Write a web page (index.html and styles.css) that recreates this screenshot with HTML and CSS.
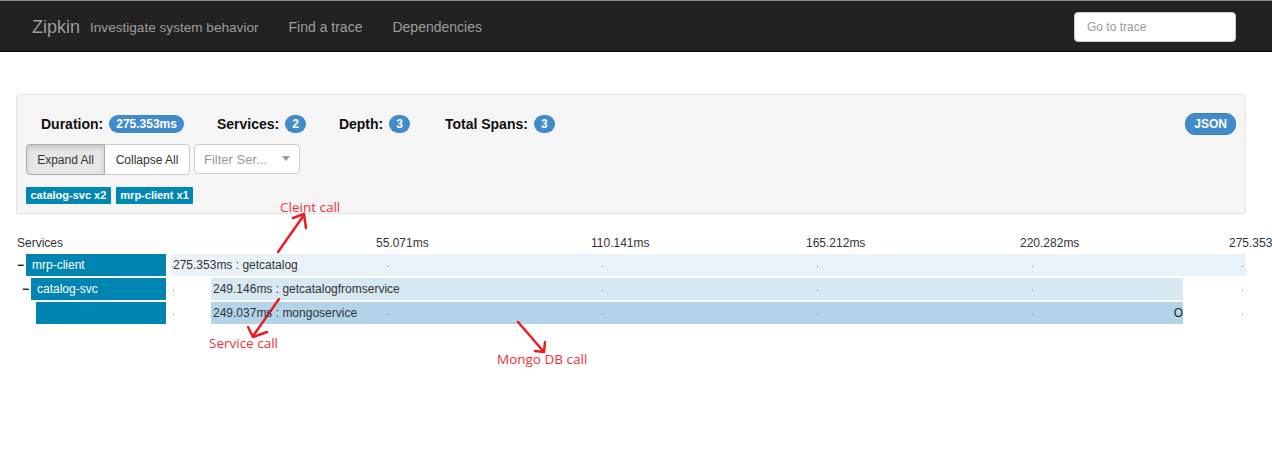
FILE: index.html
```html
<!DOCTYPE html>
<html>
<head>
<meta charset="utf-8">
<title>Zipkin</title>
<link rel="stylesheet" href="styles.css">
</head>
<body>
<header class="navbar">
  <div class="brand">Zipkin</div>
  <div class="tagline">Investigate system behavior</div>
  <nav class="nav">
    <a class="nav-link">Find a trace</a>
    <a class="nav-link">Dependencies</a>
  </nav>
  <input class="goto" type="text" placeholder="Go to trace">
</header>

<main class="page">
  <section class="summary">
    <div class="summary-head">
      <div class="stats">
        <span class="stat"><b>Duration:</b> <span class="badge">275.353ms</span></span>
        <span class="stat"><b>Services:</b> <span class="badge">2</span></span>
        <span class="stat"><b>Depth:</b> <span class="badge">3</span></span>
        <span class="stat"><b>Total Spans:</b> <span class="badge">3</span></span>
      </div>
      <span class="json-btn">JSON</span>
    </div>
    <div class="controls">
      <div class="btn-group">
        <button class="btn active">Expand All</button>
        <button class="btn">Collapse All</button>
      </div>
      <div class="select">
        <span class="select-text">Filter Ser...</span>
        <span class="caret"></span>
      </div>
    </div>
    <div class="tags">
      <span class="tag">catalog-svc x2</span>
      <span class="tag">mrp-client x1</span>
    </div>
  </section>

  <section class="trace">
    <div class="trace-row trace-header">
      <div class="svc-col svc-label">Services</div>
      <div class="timeline">
        <span class="tick-label" style="left:205px">55.071ms</span>
        <span class="tick-label" style="left:420px">110.141ms</span>
        <span class="tick-label" style="left:635px">165.212ms</span>
        <span class="tick-label" style="left:849px">220.282ms</span>
        <span class="tick-label" style="left:1058px">275.353</span>
      </div>
    </div>

    <div class="trace-row">
      <div class="svc-col depth-0">
        <span class="toggle">&minus;</span>
        <span class="svc-name">mrp-client</span>
      </div>
      <div class="timeline">
        <div class="bar bar-1" style="left:0px;width:1075px">
          <span class="bar-text">275.353ms : getcatalog</span>
        </div>
        <span class="dot" style="left:1px"></span>
        <span class="dot" style="left:216px"></span>
        <span class="dot" style="left:431px"></span>
        <span class="dot" style="left:646px"></span>
        <span class="dot" style="left:861px"></span>
        <span class="dot" style="left:1071px"></span>
      </div>
    </div>

    <div class="trace-row">
      <div class="svc-col depth-1">
        <span class="toggle">&minus;</span>
        <span class="svc-name">catalog-svc</span>
      </div>
      <div class="timeline">
        <div class="bar bar-2" style="left:40px;width:972px">
          <span class="bar-text">249.146ms : getcatalogfromservice</span>
        </div>
        <span class="dot" style="left:2px"></span>
        <span class="dot" style="left:216px"></span>
        <span class="dot" style="left:431px"></span>
        <span class="dot" style="left:646px"></span>
        <span class="dot" style="left:861px"></span>
        <span class="dot" style="left:1071px"></span>
      </div>
    </div>

    <div class="trace-row">
      <div class="svc-col depth-2">
        <span class="toggle"></span>
        <span class="svc-name"></span>
      </div>
      <div class="timeline">
        <div class="bar bar-3" style="left:40px;width:972px">
          <span class="bar-text">249.037ms : mongoservice</span>
          <span class="bar-end">O</span>
        </div>
        <span class="dot" style="left:2px"></span>
        <span class="dot" style="left:216px"></span>
        <span class="dot" style="left:431px"></span>
        <span class="dot" style="left:646px"></span>
        <span class="dot" style="left:861px"></span>
        <span class="dot" style="left:1071px"></span>
      </div>
    </div>
  </section>
</main>

<div class="annotations">
  <svg class="arrows" width="1272" height="466" viewBox="0 0 1272 466">
    <g stroke="#ec1c24" stroke-width="2.5" fill="none" stroke-linecap="round" stroke-linejoin="round">
      <path d="M278 252 L304 215"/>
      <path d="M293 218 L304 214 L306 228"/>
      <path d="M279 299 L253 336"/>
      <path d="M248 327 L253 337 L267 332"/>
      <path d="M518 322 L544 352"/>
      <path d="M545 342 L544 352 L535 351"/>
    </g>
  </svg>
  <span class="note note-client">Cleint call</span>
  <span class="note note-service">Service call</span>
  <span class="note note-mongo">Mongo DB call</span>
</div>
</body>
</html>
```

FILE: styles.css
```css
* { box-sizing: border-box; }

html, body {
  margin: 0;
  padding: 0;
  overflow: hidden;
}

body {
  font-family: "Liberation Sans", Arial, sans-serif;
  font-size: 14px;
  color: #333;
  background: #fff;
  width: 1272px;
  height: 466px;
  position: relative;
}

/* Navbar */
.navbar {
  height: 52px;
  background: #222;
  border-top: 1px solid #8a8a8a;
  border-bottom: 1px solid #080808;
  display: flex;
  align-items: center;
  padding-left: 32px;
  padding-right: 36px;
}

.brand {
  font-size: 18px;
  color: #9d9d9d;
  margin-right: 10px;
  margin-top: 2px;
}

.tagline {
  font-size: 13.6px;
  color: #9d9d9d;
  margin-top: 3px;
}

.nav {
  display: flex;
  gap: 30px;
  margin-left: 30px;
  flex: 1;
  margin-top: 2px;
}

.nav-link {
  font-size: 14px;
  color: #9d9d9d;
}

.goto {
  width: 162px;
  height: 30px;
  border: 1px solid #ccc;
  border-radius: 4px;
  padding: 0 12px;
  font-family: "Liberation Sans", Arial, sans-serif;
  font-size: 12px;
  color: #555;
  background: #fff;
  margin-top: 1px;
}

.goto::placeholder { color: #999; }

/* Page */
.page {
  padding: 42px 26px 0 16px;
}

.summary {
  background: #f5f5f5;
  border: 1px solid #e3e3e3;
  border-radius: 3px;
  padding: 19px 9px 9px 9px;
  height: 120px;
}

.summary-head {
  display: flex;
  justify-content: space-between;
  align-items: center;
  height: 20px;
  padding-left: 15px;
}

.stats {
  display: flex;
  align-items: center;
}

.stat {
  margin-right: 33px;
  display: flex;
  align-items: center;
  gap: 6px;
}

.stat:nth-child(3) {
  margin-right: 35px;
}

.stat b {
  font-weight: bold;
  font-size: 14px;
  color: #111;
}

.badge {
  display: inline-block;
  background: #428bca;
  color: #fff;
  font-weight: bold;
  font-size: 12px;
  line-height: 12px;
  padding: 3px 7px;
  border-radius: 10px;
  min-width: 10px;
  text-align: center;
}

.json-btn {
  display: inline-block;
  background: #428bca;
  color: #fff;
  font-weight: bold;
  font-size: 12px;
  line-height: 14px;
  padding: 3px 8px;
  border-radius: 10px;
  border: 1px solid #357ebd;
}

.controls {
  display: flex;
  align-items: flex-start;
  margin-top: 10px;
  gap: 4px;
}

.btn-group {
  display: flex;
}

.btn {
  font-family: "Liberation Sans", Arial, sans-serif;
  font-size: 12px;
  color: #333;
  background: #fff;
  border: 1px solid #ccc;
  height: 31px;
  padding: 0 10px;
  margin: 0;
  cursor: pointer;
}

.btn:first-child {
  border-radius: 4px 0 0 4px;
  width: 79px;
}

.btn:last-child {
  border-radius: 0 4px 4px 0;
  border-left: none;
  width: 85px;
}

.btn.active {
  background: #e6e6e6;
  border-color: #adadad;
  box-shadow: inset 0 3px 5px rgba(0, 0, 0, 0.125);
}

.select {
  width: 106px;
  height: 30px;
  border: 1px solid #ccc;
  border-radius: 4px;
  background: #fff;
  display: flex;
  align-items: center;
  justify-content: space-between;
  padding: 0 9px 0 9px;
}

.select-text {
  font-size: 13px;
  color: #999;
}

.caret {
  width: 0;
  height: 0;
  border-left: 4px solid transparent;
  border-right: 4px solid transparent;
  border-top: 5px solid #999;
  margin-bottom: 2px;
}

.tags {
  display: flex;
  gap: 5px;
  margin-top: 12px;
}

.tag {
  display: inline-block;
  background: #0087b4;
  color: #fff;
  font-weight: bold;
  font-size: 11px;
  line-height: 17px;
  height: 17px;
  padding: 0 4.5px;
  border-radius: 1px;
}

/* Trace */
.trace {
  margin-top: 20px;
}

.trace-row {
  display: flex;
  height: 22px;
  margin-bottom: 2px;
}

.trace-header {
  height: 18px;
  margin-bottom: 2px;
  font-size: 12px;
  line-height: 18px;
}

.svc-col {
  width: 150px;
  display: flex;
  align-items: stretch;
  font-size: 12px;
}

.svc-label {
  padding-left: 1px;
  color: #333;
}

.depth-0 { padding-left: 1px; }
.depth-1 { padding-left: 6px; }
.depth-2 { padding-left: 11px; }

.toggle {
  width: 9px;
  font-size: 12px;
  font-weight: bold;
  line-height: 22px;
  color: #111;
}

.svc-name {
  flex: 1;
  background: #0085b2;
  color: #fff;
  font-size: 12px;
  line-height: 22px;
  padding-left: 6px;
}

.timeline {
  position: relative;
  width: 1075px;
  margin-left: 5px;
  font-size: 12px;
}

.tick-label {
  position: absolute;
  top: 0;
  white-space: nowrap;
  color: #333;
}

.bar {
  position: absolute;
  top: 0;
  height: 22px;
  line-height: 22px;
  overflow: hidden;
}

.bar-1 { background: #eaf2f9; }
.bar-2 { background: #d7e8f3; }
.bar-3 { background: #b3d4e8; }

.bar-text {
  padding-left: 2px;
  color: #333;
  white-space: nowrap;
  position: relative;
  z-index: 1;
}

.bar-end {
  position: absolute;
  right: 0;
  top: 0;
  color: #222;
  font-size: 12px;
}

.dot {
  position: absolute;
  top: 12px;
  width: 1px;
  height: 1px;
  background: #888;
}

/* Annotations over the screenshot */
.annotations {
  position: absolute;
  left: 0;
  top: 0;
  width: 1272px;
  height: 466px;
  pointer-events: none;
}

.arrows {
  position: absolute;
  left: 0;
  top: 0;
}

.note {
  position: absolute;
  font-family: "Open Sans", "Liberation Sans", sans-serif;
  font-size: 13.5px;
  line-height: 16px;
  color: #f0303a;
  white-space: nowrap;
}

.note-client { left: 280px; top: 199px; }
.note-service { left: 209px; top: 335px; }
.note-mongo { left: 497px; top: 351px; }
```
